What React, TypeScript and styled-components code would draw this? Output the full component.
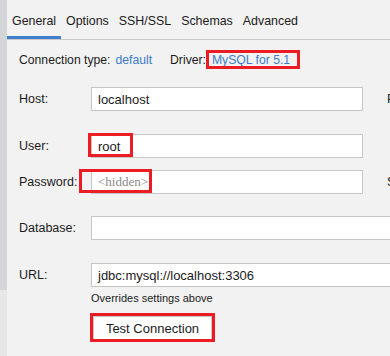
import React from 'react';
import styled, { createGlobalStyle } from 'styled-components';

const GlobalStyle = createGlobalStyle`
  html, body {
    margin: 0;
    padding: 0;
    background: #f2f2f2;
    overflow: hidden;
  }
  body {
    font-family: "Liberation Sans", Arial, sans-serif;
    font-size: 12.5px;
    color: #1b1b1b;
  }
`;

const Page = styled.div`
  display: flex;
  width: 390px;
  height: 356px;
  overflow: hidden;
`;

const SideStrip = styled.div`
  width: 7px;
  flex: none;
  display: flex;
  flex-direction: column;
  .top {
    height: 290px;
    background: #d4d5d8;
  }
  .bottom {
    flex: 1;
    background: #e6e7e9;
  }
`;

const Main = styled.div`
  flex: 1;
  min-width: 0;
  display: flex;
  flex-direction: column;
`;

const TabBar = styled.div`
  display: flex;
  height: 39px;
  border-bottom: 1px solid #c9c9c9;
`;

const Tab = styled.div<{ $active?: boolean }>`
  padding: 2px 5px 0;
  display: flex;
  align-items: center;
  box-sizing: border-box;
  height: 39px;
  font-size: 12.4px;
  box-shadow: ${(p) => (p.$active ? 'inset 0 -3px 0 #3f7fcc' : 'none')};
`;

const Form = styled.div`
  padding-left: 12px;
  display: flex;
  flex-direction: column;
`;

const Row = styled.div<{ $top: number }>`
  display: grid;
  grid-template-columns: 72px 272px auto;
  align-items: center;
  margin-top: ${(p) => p.$top}px;
  height: 24px;
  white-space: nowrap;
`;

const InfoRow = styled.div`
  display: flex;
  align-items: center;
  height: 20px;
  margin-top: 10px;
  white-space: nowrap;
  font-size: 12.2px;
`;

const Label = styled.span`
  color: #1b1b1b;
`;

const Link = styled.span`
  color: #3b7cc6;
  margin-left: 5px;
`;

const Spacer = styled.span<{ $w: number }>`
  display: inline-block;
  width: ${(p) => p.$w}px;
`;

const FieldWrap = styled.div<{ $wide?: boolean }>`
  position: relative;
  height: 24px;
  width: ${(p) => (p.$wide ? '340px' : '272px')};
  grid-column: ${(p) => (p.$wide ? '2 / 4' : 'auto')};
`;

const Input = styled.div`
  box-sizing: border-box;
  height: 24px;
  width: 100%;
  background: #ffffff;
  border: 1px solid #c6c6c6;
  padding: 0 6px;
  display: flex;
  align-items: center;
  font-size: 13px;
  color: #1b1b1b;
`;

const Placeholder = styled.span`
  font-family: "Liberation Serif", "Noto Sans CJK SC", serif;
  font-size: 13px;
  color: #8a8a8a;
`;

const Marker = styled.div<{ $l: number; $t: number; $w: number; $h: number }>`
  position: absolute;
  left: ${(p) => p.$l}px;
  top: ${(p) => p.$t}px;
  width: ${(p) => p.$w}px;
  height: ${(p) => p.$h}px;
  box-sizing: border-box;
  border: 3px solid #ec1c24;
  pointer-events: none;
`;

const MarkedText = styled.span`
  position: relative;
  margin-left: 6px;
  color: #3b7cc6;
`;

const SideLabel = styled.span`
  margin-left: 24px;
  color: #1b1b1b;
`;

const Note = styled.div`
  margin: 5px 0 0 72px;
  font-size: 11px;
  color: #1b1b1b;
  height: 14px;
`;

const ButtonWrap = styled.div`
  position: relative;
  margin: 10px 0 0 74px;
  width: 119px;
`;

const Button = styled.div`
  box-sizing: border-box;
  height: 24px;
  width: 119px;
  background: #ffffff;
  border: 1px solid #c9c9c9;
  display: flex;
  align-items: center;
  justify-content: center;
  font-size: 13px;
  color: #1b1b1b;
`;

const Footnote = styled.div`
  margin: 14px 0 0 74px;
  font-size: 12px;
  color: #9a9a9a;
  white-space: nowrap;
`;

const tabs = ['General', 'Options', 'SSH/SSL', 'Schemas', 'Advanced'];

export default function App() {
  return (
    <>
      <GlobalStyle />
      <Page>
        <SideStrip>
          <div className="top" />
          <div className="bottom" />
        </SideStrip>
        <Main>
          <TabBar>
            {tabs.map((t, i) => (
              <Tab key={t} $active={i === 0}>
                {t}
              </Tab>
            ))}
          </TabBar>
          <Form>
            <InfoRow>
              <Label>Connection type:</Label>
              <Link>default</Link>
              <Spacer $w={18} />
              <Label>Driver:</Label>
              <MarkedText>
                MySQL for 5.1
                <Marker $l={-6} $t={-3} $w={94} $h={19} />
              </MarkedText>
            </InfoRow>

            <Row $top={17}>
              <Label>Host:</Label>
              <FieldWrap>
                <Input>localhost</Input>
              </FieldWrap>
              <SideLabel>Port:</SideLabel>
            </Row>

            <Row $top={23}>
              <Label>User:</Label>
              <FieldWrap>
                <Input>root</Input>
                <Marker $l={-3} $t={-1} $w={45} $h={24} />
              </FieldWrap>
              <span />
            </Row>

            <Row $top={12}>
              <Label>Password:</Label>
              <FieldWrap>
                <Input>
                  <Placeholder>&lt;hidden&gt;</Placeholder>
                </Input>
                <Marker $l={-12} $t={-1} $w={73} $h={24} />
              </FieldWrap>
              <SideLabel>Save:</SideLabel>
            </Row>

            <Row $top={22}>
              <Label>Database:</Label>
              <FieldWrap $wide>
                <Input />
              </FieldWrap>
            </Row>

            <Row $top={23}>
              <Label>URL:</Label>
              <FieldWrap $wide>
                <Input>jdbc:mysql://localhost:3306</Input>
              </FieldWrap>
            </Row>

            <Note>Overrides settings above</Note>

            <ButtonWrap>
              <Button>Test Connection</Button>
              <Marker $l={-3} $t={-3} $w={125} $h={29} />
            </ButtonWrap>

            <Footnote>DBMS: MySQL (ver. 8.0.20)</Footnote>
          </Form>
        </Main>
      </Page>
    </>
  );
}
